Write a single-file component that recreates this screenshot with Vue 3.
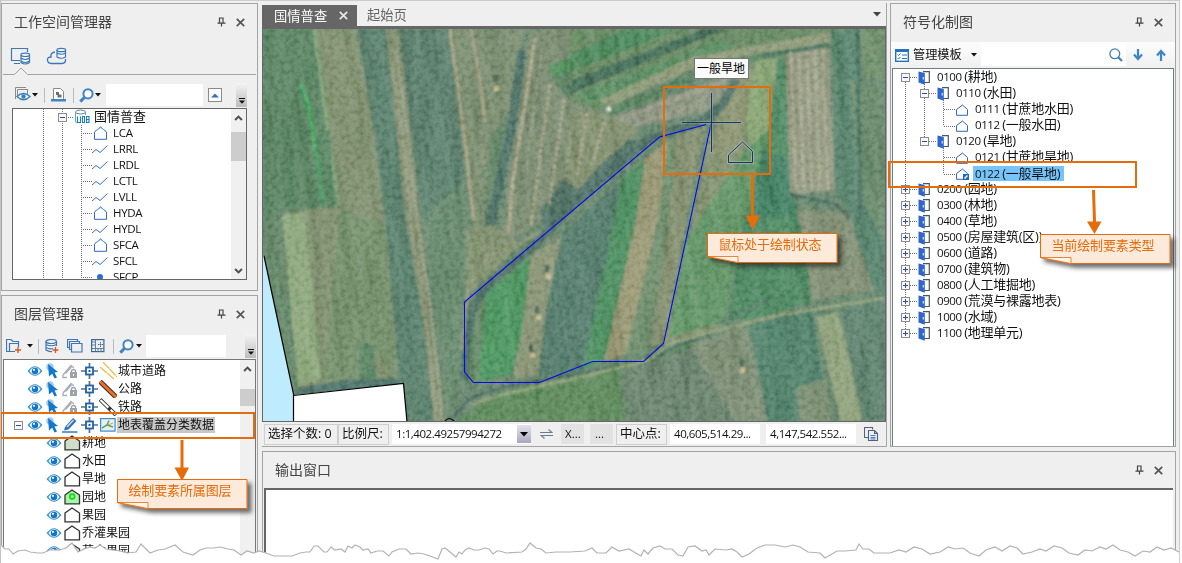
<script setup>
const datasets = [
  { name: 'LCA', icon: 'region' },
  { name: 'LRRL', icon: 'line' },
  { name: 'LRDL', icon: 'line' },
  { name: 'LCTL', icon: 'line' },
  { name: 'LVLL', icon: 'line' },
  { name: 'HYDA', icon: 'region' },
  { name: 'HYDL', icon: 'line' },
  { name: 'SFCA', icon: 'region' },
  { name: 'SFCL', icon: 'line' },
  { name: 'SFCP', icon: 'point' },
]

const layers = [
  { name: '城市道路', icon: 'road-city' },
  { name: '公路', icon: 'road-main' },
  { name: '铁路', icon: 'road-rail' },
]

const classes = [
  { name: '耕地', fill: '#cfdcc8' },
  { name: '水田', fill: '#fff' },
  { name: '旱地', fill: '#fff' },
  { name: '园地', fill: '#a9f5a9', ring: true },
  { name: '果园', fill: '#fff' },
  { name: '乔灌果园', fill: '#fff' },
  { name: '苗木果园', fill: '#d9fbe0', ring: true },
]

const symbols = [
  { code: '0100', name: '耕地', level: 0, open: true },
  { code: '0110', name: '水田', level: 1, open: true },
  { code: '0111', name: '甘蔗地水田', level: 2 },
  { code: '0112', name: '一般水田', level: 2 },
  { code: '0120', name: '旱地', level: 1, open: true },
  { code: '0121', name: '甘蔗地旱地', level: 2 },
  { code: '0122', name: '一般旱地', level: 2, active: true },
  { code: '0200', name: '园地', level: 0 },
  { code: '0300', name: '林地', level: 0 },
  { code: '0400', name: '草地', level: 0 },
  { code: '0500', name: '房屋建筑(区)', level: 0 },
  { code: '0600', name: '道路', level: 0 },
  { code: '0700', name: '建筑物', level: 0 },
  { code: '0800', name: '人工堆掘地', level: 0 },
  { code: '0900', name: '荒漠与裸露地表', level: 0 },
  { code: '1000', name: '水域', level: 0 },
  { code: '1100', name: '地理单元', level: 0 },
]

const fields = [
  { c: '#56805f', p: '263,29 316,29 338,206 263,220' },
  { c: '#5f8163', p: '263,215 285,212 306,400 295,395 263,255' },
  { c: '#7a8b6b', p: '316,29 356,29 374,130 385,220 399,385 300,395 285,212 338,206' },
  { c: '#6f8b66', p: '340,210 386,225 398,382 366,340 352,395 322,388' },
  { c: '#88a277', p: '282,215 304,212 322,378 298,388' },
  { c: '#55805f', p: '360,342 372,345 378,384 358,386' },
  { c: '#4c6f66', p: '298,388 345,380 402,378 404,386 294,396' },
  { c: '#557b68', p: '357,29 386,29 396,130 406,220 423,320 434,421 405,421 399,380 386,225 374,130' },
  { c: '#808e70', p: '386,29 399,29 411,130 421,220 432,320 445,421 434,421 423,320 406,220 396,130' },
  { c: '#587c69', p: '399,29 448,29 456,100 466,180 440,230 421,220 411,130' },
  { c: '#648569', p: '421,220 466,180 480,240 465,300 462,380 452,421 445,421 432,310' },
  { c: '#75886b', p: '450,29 524,29 512,120 496,220 474,240 462,140' },
  { c: '#5e8163', p: '490,140 510,110 500,210 484,230' },
  { c: '#74876c', p: '530,29 585,29 600,120 620,150 570,200 500,250 510,160' },
  { c: '#7b8c6b', p: '466,230 494,225 520,245 490,275 466,296' },
  { c: '#4f6f64', p: '578,160 612,140 640,140 545,232 540,210' },
  { c: '#4f8a59', p: '548,66 600,45 600,64 553,78' },
  { c: '#55795c', p: '553,80 580,66 580,105 566,98' },
  { c: '#64865f', p: '570,29 885,29 885,60 720,50 600,110 570,100' },
  { c: '#4a8459', p: '570,55 625,29 680,29 570,72' },
  { c: '#436a55', p: '572,80 705,29 725,29 570,94' },
  { c: '#588a60', p: '575,95 720,40 735,46 590,104' },
  { c: '#8b9876', p: '600,100 690,58 830,32 830,42 700,66 610,106' },
  { c: '#557f5b', p: '606,108 735,58 780,50 780,56 700,76 616,114' },
  { c: '#86907a', p: '612,118 730,74 728,90 706,112 630,128' },
  { c: '#7b8b6b', p: '570,110 605,112 640,130 600,165 578,190 565,180' },
  { c: '#7d8d6a', p: '725,100 755,60 765,110 740,220 720,330 664,344 690,240 708,140' },
  { c: '#87906e', p: '735,80 752,64 748,120 738,150 712,155 722,110' },
  { c: '#84a06f', p: '756,60 778,58 768,130 750,150 746,120' },
  { c: '#5e9163', p: '745,150 768,130 742,230 724,322 668,338 686,240' },
  { c: '#4b855f', p: '780,58 786,58 790,195 802,215 811,302 760,318 728,320 742,230 768,130' },
  { c: '#3f7d60', p: '762,150 790,160 795,215 750,220' },
  { c: '#8b937a', p: '785,50 829,46 835,190 790,196' },
  { c: '#55806a', p: '831,32 860,29 862,110 885,200 885,298 872,290 850,212 836,190' },
  { c: '#6c8c68', p: '860,34 885,30 885,80 864,76' },
  { c: '#668769', p: '850,80 885,84 885,240 860,200' },
  { c: '#7d8b70', p: '796,210 848,212 874,290 812,300 806,250' },
  { c: '#5f8361', p: '466,302 488,286 478,380 466,378' },
  { c: '#48915c', p: '530,257 487,292 478,382 512,374 522,330' },
  { c: '#84906f', p: '531,256 562,234 546,310 538,376 513,378 522,330' },
  { c: '#517868', p: '562,234 622,180 612,230 582,374 538,376 546,310' },
  { c: '#4a8a5c', p: '622,178 645,160 636,220 604,362 582,370 606,260' },
  { c: '#93926e', p: '645,158 668,142 660,220 626,354 604,362 636,220' },
  { c: '#6b8968', p: '668,142 676,136 670,230 652,350 626,354 658,220' },
  { c: '#808c6c', p: '676,136 706,126 690,200 674,290 664,342 650,350 668,230' },
  { c: '#5a8659', p: '455,421 500,392 570,376 660,352 720,336 730,350 745,421' },
  { c: '#66806a', p: '620,370 700,345 735,421 625,421' },
  { c: '#788970', p: '690,345 745,325 755,360 768,421 735,421' },
  { c: '#4f7f68', p: '750,325 812,308 830,421 768,421 758,370' },
  { c: '#74896c', p: '796,388 826,378 832,421 800,421' },
  { c: '#8a9d76', p: '816,318 838,312 865,421 840,421' },
  { c: '#5a7e6b', p: '840,308 885,300 885,421 862,421' },
]

const tracks = [
  { c: '#7ba073', w: 3, d: 'M314 29L338 205' },
  { c: '#3f8f58', w: 4, d: 'M300 84L310 115L318 160L322 203' },
  { c: '#48a861', w: 3, d: 'M301 84L309 105L315 150' },
  { c: '#4f7f5a', w: 5, d: 'M327 130L332 203' },
  { c: '#9f9d80', w: 2, d: 'M390 50L402 130L411 220L425 300L436 421', dash: '2 2' },
  { c: '#a5a389', w: 2, d: 'M397 50L407 130L417 220L430 300L443 421', dash: '3 2' },
  { c: '#a39f80', w: 3, d: 'M450 29L457 80L466 150L474 220' },
  { c: '#a09c80', w: 3, d: 'M471 29L480 80L485 122' },
  { c: '#8c977a', w: 3, d: 'M481 130L483 165', dash: '4 2' },
  { c: '#4a6d62', w: 9, d: 'M522 50L513 120L500 180L490 225' },
  { c: '#b1a98a', w: 3, d: 'M535 38L524 110L513 180L508 235', dash: '6 1' },
  { c: '#aaa486', w: 3, d: 'M550 84L541 150L531 225', dash: '4 2' },
  { c: '#a9a589', w: 3, d: 'M564 99L557 150L549 205', dash: '4 2' },
  { c: '#a7a388', w: 3, d: 'M587 113L577 175', dash: '4 2' },
  { c: '#a7a388', w: 3, d: 'M604 122L592 165', dash: '4 2' },
  { c: '#98a082', w: 2, d: 'M542 50L526 170M572 125L565 180', dash: '4 3' },
  { c: '#4b6c62', w: 8, d: 'M736 80L722 106L700 122L650 138L570 208L535 245L490 283L474 304L467 345L464 380' },
  { c: '#8b9575', w: 3, d: 'M540 232L515 246L488 256L468 290L462 350' },
  { c: '#4b6b60', w: 3, d: 'M450 421L470 398L500 388L575 374L645 362L680 345L720 330' },
  { c: '#8a9d75', w: 3, d: 'M470 405L500 395L580 377L650 360L668 344L720 330L780 315L885 298' },
  { c: '#4a6c5e', w: 3, d: 'M790 194L835 204L850 218' },
  { c: '#527763', w: 3, d: 'M720 322L770 300' },
  { c: '#47725e', w: 4, d: 'M762 56L829 45M858 34L860 220' },
  { c: '#a9a98e', w: 3, d: 'M791 52L796 190M799 52L804 190M807 51L812 190M815 50L820 190M823 49L828 190', dash: '5 1' },
  { c: '#9a9b89', w: 2, d: 'M620 120L725 82M635 125L715 98M630 116L730 77', dash: '5 2' },
]

const blocks = [[547, 270, 549, 277], [537, 311, 539, 318], [531, 350, 533, 356], [742, 364, 743, 371], [496, 80, 497, 89]]

const tear =
  'M0 544L5 549L9 549L13 554L18 551L25 550L30 552L38 553L43 553L50 550L60 550L66 548L72 543L78 552L84 549L90 547L95 548L100 545L106 549L113 550L120 551L127 553L136 552L141 544L145 548L150 553L158 550L165 549L170 547L175 545L183 552L193 555L200 550L206 548L213 548L220 547L228 549L234 550L241 555L247 551L254 553L259 551L266 553L274 556L292 556L300 553L306 552L310 552L314 546L318 546L324 552L327 552L331 547L335 550L341 549L345 552L348 546L352 548L355 545L360 547L363 550L368 549L371 553L377 551L383 551L389 556L392 552L399 549L403 549L406 549L411 554L418 553L424 554L430 556L438 559L442 549L445 548L450 552L456 557L459 552L462 554L465 550L469 548L474 550L479 550L485 548L489 549L493 554L497 551L500 551L506 553L522 552L526 549L530 543L536 548L541 549L546 553L556 552L570 552L585 551L592 548L597 553L606 553L612 547L619 551L629 549L634 552L641 556L644 550L648 554L653 548L660 546L665 549L672 549L678 555L683 556L688 547L695 546L702 551L706 550L709 555L715 549L726 550L732 549L737 552L742 557L749 554L757 548L765 545L775 545L785 547L793 545L800 547L808 552L820 553L825 558L837 551L845 551L856 550L859 544L863 549L869 549L874 553L890 553L899 550L906 552L914 547L922 549L930 554L940 552L948 547L955 549L963 548L970 553L979 556L986 550L995 547L1002 551L1010 546L1017 548L1023 554L1032 552L1040 549L1046 551L1054 546L1062 548L1069 553L1078 555L1085 550L1092 551L1100 547L1106 549L1113 545L1120 550L1128 552L1135 556L1143 551L1150 552L1157 547L1164 550L1171 548L1179 552'

const notes = [
  { x: 117, y: 479, text: '绘制要素所属图层' },
  { x: 707, y: 233, text: '鼠标处于绘制状态' },
  { x: 1040, y: 234, text: '当前绘制要素类型' },
]
</script>

<template>
  <div class="app">
    <svg class="defs" width="0" height="0">
      <symbol id="pin" viewBox="0 0 9 10"><path d="M2.5 1H6.5M2.5 .5V6M6 .5V6M.5 6.2H8.500M4.500 6.500V9.500" fill="none" stroke="#444" stroke-width="1.200" /></symbol>
      <symbol id="cross" viewBox="0 0 9 9"><path d="M.8 .8L8.2 8.2M8.2 .8L.8 8.2" stroke="currentColor" stroke-width="1.7" /></symbol>
      <symbol id="caret" viewBox="0 0 6 4"><path d="M0 0H6L3 3.5Z" fill="#111" /></symbol>
      <symbol id="region" viewBox="0 0 16 16"><path d="M2.5 7L8.5 2L14.5 7V14.3H2.5Z" fill="none" stroke="#3366c8" stroke-width="1" /><path d="M2.5 7L8.5 2L14.5 7" fill="none" stroke="#5aa7cf" /></symbol>
      <symbol id="leaf" viewBox="0 0 16 16"><path d="M2.5 8.5L8.5 4L13.5 8.5V14.3H2.5Z" fill="none" stroke="#3366c8" /></symbol>
      <symbol id="line" viewBox="0 0 16 16"><path d="M0 12L4 8.5L8 11.5L15.5 4.5" fill="none" stroke="#3f67c0" /></symbol>
      <symbol id="point" viewBox="0 0 16 16"><circle cx="8" cy="8" r="3" fill="#2d6fd0" /></symbol>
      <symbol id="search" viewBox="0 0 15 15"><circle cx="9" cy="5.8" r="4.6" fill="#fff" stroke="#4084c4" stroke-width="2" /><path d="M5.5 9.4L1.3 13.6" stroke="#4084c4" stroke-width="3" /></symbol>
      <symbol id="eye" viewBox="0 0 16 12"><path d="M.5 6Q8-3.5 15.5 6Q8 15.5 .5 6Z" fill="#3f93d2" /><path d="M2.5 6Q4.500 2.500 8 2.200Q11.500 2.500 13.500 6Q11.500 9.500 8 9.800Q4.500 9.500 2.500 6Z" fill="#eef6fc" /><circle cx="8" cy="6" r="3.2" fill="#1376c6" /><circle cx="7" cy="4.8" r="1.1" fill="#fff" /></symbol>
      <symbol id="pick" viewBox="0 0 14 16"><circle cx="4" cy="4" r="3.8" fill="#9fcdf2" /><path d="M2 1L12 9L8.5 9.5L11 14.5L8.5 15.5L6.2 10.8L3 13.5Z" fill="#1478cc" /></symbol>
      <symbol id="lockpen" viewBox="0 0 16 16"><path d="M1 12L9 2.5L12 5M1 12V14.5H5M3.5 10.5L9.5 4" fill="none" stroke="#a9b0b8" stroke-width="1.4" /><path d="M8 9H15V15H8Z" fill="#9ba2aa" /><path d="M9.5 9V7.5Q11.5 5.5 13.5 7.5V9" fill="none" stroke="#9ba2aa" stroke-width="1.3" /><path d="M11.5 11V13" stroke="#fff" /></symbol>
      <symbol id="pen" viewBox="0 0 16 16"><path d="M3 10L11 1L14.5 4L6.5 12.5L2 13.5Z" fill="#3472b4" /><path d="M5 10L11.5 3" stroke="#d2e3f5" stroke-width="1.2" /><path d="M0 15H15.5" stroke="#3b82c4" stroke-width="1.6" /></symbol>
      <symbol id="snap" viewBox="0 0 17 16"><path d="M0 8H17M8.5 0V16" stroke="#54708c" stroke-width="1.7" /><rect x="5" y="4.5" width="7" height="7" fill="#fff" stroke="#1f62a8" stroke-width="1.8" /><rect x="7.5" y="7" width="2" height="2" fill="#1f62a8" /></symbol>
      <symbol id="road-city" viewBox="0 0 18 18"><path d="M1 5L15 17M4 0L18 15" stroke="#f0c055" stroke-width="1.4" stroke-dasharray="9 .6" /></symbol>
      <symbol id="road-main" viewBox="0 0 18 18"><path d="M1 1.5L17 17" stroke="#333" stroke-width="5" /><path d="M1 1.5L17 17" stroke="#f26f21" stroke-width="3" /></symbol>
      <symbol id="road-rail" viewBox="0 0 18 18"><path d="M1 1.5L17 17" stroke="#333" stroke-width="4" /><path d="M1.5 2L16.5 16.5" stroke="#fff" stroke-width="2.2" stroke-dasharray="11 3" /></symbol>
      <symbol id="door" viewBox="0 0 12 14"><path d="M5 .7H11.3V11.5H5" fill="#fff" stroke="#4b5560" stroke-width="1.2" /><path d="M.5 .5L6.8 2V13.8L.5 11.5Z" fill="#2f66cc" /><path d="M5.2 6V8.5" stroke="#fff" stroke-width="1" /></symbol>
      <symbol id="minus" viewBox="0 0 9 9"><rect x=".5" y=".5" width="8" height="8" fill="#f8f8f8" stroke="#8b8b8b" /><path d="M2 4.5H7" stroke="#2e4ca0" /></symbol>
      <symbol id="plus" viewBox="0 0 9 9"><rect x=".5" y=".5" width="8" height="8" fill="#f8f8f8" stroke="#8b8b8b" /><path d="M2 4.5H7M4.5 2V7" stroke="#2e4ca0" /></symbol>
      <symbol id="chevron" viewBox="0 0 8 6"><path d="M.6 5L4 1.6L7.4 5" fill="none" stroke="#505050" stroke-width="2" /></symbol>
      <symbol id="overflow" viewBox="0 0 6 6"><path d="M0 .500H6" stroke="#111" /><path d="M0 2.500H6L3 5.800Z" fill="#111" /></symbol>
    </svg>

    <div class="left">
      <section class="panel workspace">
        <header class="title">工作空间管理器<i></i><svg class="ic-pin"><use href="#pin" /></svg><svg class="ic-x"><use href="#cross" /></svg></header>
        <svg class="tabs" width="254" height="38" viewBox="2 40 254 38">
          <g fill="none" stroke="#3c78b4">
            <path d="M20 60.500H11.500V48.500H27.500V52M14 63.500H20" stroke-width="1.200" />
            <g fill="#f4f8fc" stroke-width="1.200">
              <path d="M21 55V62.500Q25 65.500 29.500 62.500V55" /><path d="M21 58Q25 61 29.500 58M21 61Q25 64 29.500 61" /><ellipse cx="25.300" cy="54.800" rx="4.300" ry="1.700" />
            </g>
            <path d="M55 52Q50 53 51 57Q47 57 47.500 60.500Q48 63.500 51 63.500H62Q66 63 65.500 59" stroke-width="1.300" />
            <g fill="#f4f8fc" stroke-width="1.200">
              <path d="M57 50V57Q61 59.500 65.500 57V50" /><path d="M57 53Q61 55.500 65.500 53" /><ellipse cx="61.300" cy="50" rx="4.300" ry="1.700" />
            </g>
            <path d="M3 74.500H14.500L21 68L27.500 74.500H256" stroke="#a3a3a3" />
          </g>
        </svg>
        <div class="toolbar tb1">
          <svg class="ic-view" width="16" height="16"><path d="M2.500 10V2.500H13M.500 12V.500H11" fill="none" stroke="#8a8a8a" /><path d="M12.500 3V8" stroke="#8a8a8a" fill="none" /><path d="M2 9.500Q8.500 3.500 15 9.500Q8.500 16 2 9.500Z" fill="#fff" stroke="#3c80be" stroke-width="1.400" /><circle cx="8.500" cy="9.500" r="2.200" fill="#3c80be" /></svg>
          <svg class="ic-caret"><use href="#caret" /></svg><b class="sep"></b>
          <svg class="ic-save" width="15" height="14"><path d="M2.500 11V.500H9.500L12.500 3.500V11" fill="#fff" stroke="#888" /><path d="M5 4H8V6.500H10.500V9.500H6.500V7H5Z" fill="#64707c" /><path d="M0 11H15V13.500H0Z" fill="#4084c4" /></svg>
          <b class="sep"></b>
          <svg class="ic-search"><use href="#search" /></svg><svg class="ic-caret"><use href="#caret" /></svg>
          <div class="field f1"></div>
          <div class="up"><svg width="8" height="5"><path d="M0 4.500L4 .500L8 4.500Z" fill="#2f77bd" /></svg></div>
          <div class="more"><svg><use href="#overflow" /></svg></div>
        </div>
        <div class="tree">
          <svg class="guides" width="90" height="170" viewBox="13 109 90 170"><path d="M43.500 109V279M62.500 109V279M81.500 125V279M66 117.500H74M81 133.500H92M81 149.500H92M81 165.500H92M81 181.500H92M81 197.500H92M81 213.500H92M81 229.500H92M81 245.500H92M81 261.500H92M81 277.500H92" stroke="#707070" stroke-dasharray="1 1" /></svg>
          <div class="rows">
            <div class="row root"><svg class="ic-box"><use href="#minus" /></svg>
              <svg class="ic-udb" width="16" height="16"><path d="M1.500 3V12M11.500 3V6M1.500 12Q2 14 3 14" fill="none" stroke="#5aa9cc" /><ellipse cx="6.500" cy="3" rx="5" ry="2" fill="#fff" stroke="#5585a8" /><path d="M3.500 7.500V13.500H6.500V7.500M8.500 7.500H10.500V13.500H8.500ZM12.500 7.500H15V13.500H12.500ZM12.500 10.500H15" fill="none" stroke="#1b7fc0" stroke-width="1.100" /></svg>
              <span>国情普查</span></div>
            <div v-for="d in datasets" :key="d.name" class="row data"><svg class="ic16"><use :href="'#' + d.icon" /></svg><span>{{ d.name }}</span></div>
          </div>
          <div class="scroll"><svg class="ic-up"><use href="#chevron" /></svg><div class="thumb t1"></div><i></i><svg class="ic-up down"><use href="#chevron" /></svg></div>
        </div>
      </section>

      <section class="panel layermgr">
        <header class="title">图层管理器<i></i><svg class="ic-pin"><use href="#pin" /></svg><svg class="ic-x"><use href="#cross" /></svg></header>
        <div class="toolbar tb2">
          <svg width="16" height="14"><path d="M9 12.500H.500V.500H5L7 2.500H12.500V8M3.500 12V4.500H13" fill="none" stroke="#3c78b4" stroke-width="1.200" /><path d="M12 8V14M9 11H15" stroke="#d8541c" stroke-width="1.300" /></svg>
          <svg class="ic-caret g1"><use href="#caret" /></svg><b class="sep"></b>
          <svg width="14" height="14"><path d="M1 2.500V11Q4 13 7 12.500M11.500 2.500V7M1 5.500Q6 8 11.500 5.500M1 8.500Q5 10.500 8 9.500" fill="none" stroke="#3c78b4" stroke-width="1.200" /><ellipse cx="6.200" cy="2.500" rx="5.200" ry="2" fill="none" stroke="#3c78b4" stroke-width="1.200" /><path d="M10.500 8V14M7.500 11H13.500" stroke="#d8541c" stroke-width="1.300" /></svg>
          <svg class="g2" width="16" height="14"><path d="M2 8.500H.500V.500H10.500V2M4 10.500H2.500V2.500H12.500V4M4.500 4.500H15V13H4.500Z" fill="none" stroke="#3c78b4" stroke-width="1.200" /></svg>
          <svg class="g2" width="14" height="14"><rect x=".6" y=".6" width="12.300" height="12" fill="none" stroke="#3c6894" stroke-width="1.200" /><path d="M4.500 1V12M1 9.500H13M1 3H4M1 6H4M7 13V10M10 13V10" stroke="#5d7fa2" /><path d="M9.500 3V8M7 5.500H12" stroke="#2c6da8" stroke-dasharray="1.500 .5" /></svg>
          <b class="sep"></b>
          <svg class="ic-search"><use href="#search" /></svg><svg class="ic-caret"><use href="#caret" /></svg>
          <div class="field f2"></div><i></i>
          <div class="more"><svg><use href="#overflow" /></svg></div>
        </div>
        <div class="layers">
          <div class="rows">
            <div v-for="l in layers" :key="l.name" class="lrow">
              <svg class="ic-eye"><use href="#eye" /></svg><svg class="ic-pick"><use href="#pick" /></svg><svg class="ic16"><use href="#lockpen" /></svg><svg class="ic-snap"><use href="#snap" /></svg><svg class="ic18"><use :href="'#' + l.icon" /></svg><span>{{ l.name }}</span>
            </div>
            <div class="lrow current">
              <svg class="ic-box"><use href="#minus" /></svg><svg class="ic-eye"><use href="#eye" /></svg><svg class="ic-pick"><use href="#pick" /></svg><svg class="ic16"><use href="#pen" /></svg><svg class="ic-snap"><use href="#snap" /></svg>
              <svg class="ic-map" width="16" height="14"><rect x=".6" y=".6" width="14.500" height="12.500" fill="#e4f1f4" stroke="#3c8ac8" stroke-width="1.200" /><path d="M2 10L7 7L9 2.500M7 7L13 9" fill="none" stroke="#65a05c" stroke-width="1.500" /><path d="M8 7L13 5" stroke="#d9a04a" /></svg>
              <span>地表覆盖分类数据</span>
            </div>
            <div v-for="c in classes" :key="c.name" class="lrow sub">
              <svg class="ic-eye"><use href="#eye" /></svg>
              <svg width="17" height="16"><path d="M1 6L8 1L15.500 6V14.800H1Z" :fill="c.fill" stroke="#303030" stroke-width="1.300" /><circle v-if="c.ring" cx="8.200" cy="7.500" r="2.400" fill="none" stroke="#10d810" stroke-width="1.600" /></svg>
              <span>{{ c.name }}</span>
            </div>
          </div>
          <div class="scroll"><svg class="ic-up"><use href="#chevron" /></svg><div class="thumb t2"></div></div>
        </div>
      </section>
    </div>

    <div class="main">
      <div class="upper">
        <section class="mapwin">
          <nav class="doctabs">
            <span class="tab on">国情普查<svg class="ic-x"><use href="#cross" /></svg></span><span class="tab">起始页</span><i></i>
            <svg class="dd" width="8" height="5"><path d="M0 0H8L4 4.500Z" fill="#444" /></svg>
          </nav>
          <svg class="map" viewBox="263 29 622 392">
            <defs>
              <filter id="soft" x="0" y="0" width="1" height="1"><feGaussianBlur stdDeviation=".9" /></filter>
              <filter id="grain" x="0" y="0" width="1" height="1" color-interpolation-filters="sRGB">
                <feTurbulence type="fractalNoise" baseFrequency=".2" numOctaves="3" seed="4" />
                <feColorMatrix values="2 0 0 0 -.25  2 0 0 0 -.25  2 0 0 0 -.25  0 0 0 0 1" />
              </filter>
              <filter id="streak" x="0" y="0" width="1" height="1" color-interpolation-filters="sRGB">
                <feTurbulence type="fractalNoise" baseFrequency=".1 .012" numOctaves="3" seed="9" />
                <feColorMatrix values="2 0 0 0 -.3  2 0 0 0 -.3  2 0 0 0 -.3  0 0 0 0 1" />
              </filter>
            </defs>
            <rect x="263" y="29" width="623" height="393" fill="#64836a" />
            <g filter="url(#soft)">
              <polygon v-for="(f, i) in fields" :key="i" :points="f.p" :fill="f.c" />
              <path v-for="(t, i) in tracks" :key="'t' + i" :d="t.d" :stroke="t.c" :stroke-width="t.w" :stroke-dasharray="t.dash" fill="none" />
              <g v-for="b in blocks" :key="b[0]"><rect :x="b[0] - 2" :y="b[1] - 5" width="4" height="7" fill="#435f50" /><rect :x="b[2] - 3" :y="b[3] - 3" width="5" height="5" fill="#c4bd92" /></g>
              <circle cx="609" cy="109" r="2.500" fill="#e4ead6" />
            </g>
            <g transform="rotate(-7 420 225)"><rect class="texture streak" x="200" y="-60" width="760" height="600" filter="url(#streak)" /></g>
            <rect class="texture grain" x="263" y="29" width="623" height="393" filter="url(#grain)" />
            <path d="M264 256L293.500 394V422H263V256Z" fill="#bfebff" />
            <path d="M293.500 395L403.500 383.500L407 422H293.500Z" fill="#fff" />
            <path d="M264 256L293.500 394V422M293.500 395.500L403.500 383.500L407 422M445 421Q449 416 454 421" fill="none" stroke="#000" stroke-width="1.200" />
            <path d="M706 124.500L659.500 137L464.500 302V372L473.500 382.500H539.500L592.500 361.500H643.500L663.500 343.500L711 124" fill="none" stroke="#0808e8" stroke-width="1.100" />
            <g fill="none">
              <path d="M681 122.500H742M711.500 92V153" stroke="#a9b6ad" stroke-opacity=".4" stroke-width="3" /><path d="M728.500 155L742.500 142L752.500 151.500V162.500H728.500Z" stroke="#a9b6ad" stroke-opacity=".7" stroke-width="3" />
              <path d="M682 122.500H741M711.500 93V152M728.500 155L742.500 142L752.500 151.500V162.500H728.500Z" stroke="#17365f" />
            </g>
          </svg>
          <footer class="status">
            <span class="cell s1">选择个数: 0</span><span class="cell s2">比例尺:</span>
            <span class="input scale"><span class="num">1:1,402.49257994272</span><b><svg width="8" height="5"><path d="M0 0H8L4 4.500Z" fill="#000" /></svg></b></span>
            <svg class="swap" width="13" height="10"><path d="M0 3.500H12L8.500 .500M13 6.500H1L4.500 9.500" fill="none" stroke="#6c7a8c" stroke-width="1.100" /></svg>
            <span class="btn">X...</span><span class="btn b2">...</span><span class="cell s3">中心点:</span>
            <span class="input c1 num">40,605,514.29...</span><span class="input c2 num">4,147,542.552...</span>
            <svg class="copy" width="15" height="15"><path d="M4 10.500H.500V.500H8.500V2.500M4.500 3.500H10.500L13.500 6.500V13.500H4.500ZM10.500 3.500V6.500H13.500" fill="none" stroke="#52627c" stroke-width="1.100" /><path d="M6.500 8.500H11.500M6.500 10.500H11.500M6.500 12H11.500" stroke="#3c7ec4" /></svg>
          </footer>
        </section>

        <section class="panel symbols">
          <header class="title">符号化制图<i></i><svg class="ic-pin"><use href="#pin" /></svg><svg class="ic-x"><use href="#cross" /></svg></header>
          <div class="toolbar tb3">
            <svg width="14" height="13"><rect x=".7" y=".7" width="12.600" height="11.600" fill="#fff" stroke="#2373bc" stroke-width="1.400" /><path d="M1 2H13" stroke="#2373bc" stroke-width="2" /><path d="M2.500 5.500L3.500 6.500L5.500 4.500M2.500 9L3.500 10L5.500 8M7 6H12M7 9.500H12" fill="none" stroke="#2373bc" /></svg>
            <span class="mt">管理模板</span><svg class="ic-caret"><use href="#caret" /></svg>
            <div class="field f3"><svg width="14" height="14"><circle cx="5.800" cy="5.800" r="4.900" fill="none" stroke="#3f7fb8" stroke-width="1.300" /><path d="M9.500 9.500L13 13" stroke="#3f7fb8" stroke-width="2.200" /></svg></div>
            <svg class="arr a1" width="10" height="12"><path d="M5 0V9M1 5.500L5 10L9 5.500" fill="none" stroke="#3d85c6" stroke-width="2.200" /></svg>
            <svg class="arr a2" width="10" height="12"><path d="M5 12V3M1 6.500L5 2L9 6.500" fill="none" stroke="#3d85c6" stroke-width="2.200" /></svg>
          </div>
          <div class="stree">
            <svg class="guides" width="80" height="280" viewBox="893 69 80 280"><path d="M905.500 82V333M924.500 84V141M943.500 100V126M943.500 148V174M910 77.500H918M929 93.500H937M929 141.500H937M944 109.500H956M944 126.500H956M944 157.500H956M944 174.500H956M910 189.500H918M910 205.500H918M910 221.500H918M910 237.500H918M910 253.500H918M910 269.500H918M910 285.500H918M910 301.500H918M910 317.500H918M910 333.500H918" stroke="#707070" stroke-dasharray="1 1" /></svg>
            <div v-for="s in symbols" :key="s.code" class="srow" :class="['lv' + s.level, { active: s.active }]">
              <template v-if="s.level < 2"><svg class="ic-box"><use :href="s.open ? '#minus' : '#plus'" /></svg><svg class="ic-door"><use href="#door" /></svg></template>
              <svg v-else class="ic16"><use href="#leaf" /><path v-if="s.active" d="M9 9H15V15H9Z" fill="#1b6ac0" /><path v-if="s.active" d="M10.500 13.500L13.500 10.500" stroke="#fff" stroke-width="1.500" /></svg>
              <span class="label"><span class="code">{{ s.code }}</span> ({{ s.name }})</span>
            </div>
          </div>
        </section>
      </div>

      <section class="panel output">
        <header class="title">输出窗口<i></i><svg class="ic-pin"><use href="#pin" /></svg><svg class="ic-x"><use href="#cross" /></svg></header>
        <div class="console"></div>
      </section>
    </div>

    <svg class="overlay" width="1182" height="563" viewBox="0 0 1182 563">
      <defs><filter id="drop" x="-10%" y="-20%" width="125%" height="170%"><feDropShadow dx="4" dy="4" stdDeviation="2" flood-color="#222" flood-opacity=".65" /></filter></defs>
      <path :d="tear + 'L1182 552V563H0Z'" fill="#fff" /><path :d="tear" fill="none" stroke="#b2b2b2" stroke-width="1.200" />
      <g fill="none" stroke="#e46c0a" stroke-width="2"><rect x="664" y="87" width="106" height="87" /><rect x="1" y="413" width="253" height="25" /><rect x="889" y="162" width="247" height="25" /></g>
      <g fill="#e46c0a" stroke="#e46c0a">
        <path d="M752.500 174V217M182 440V468M1093.500 190L1094.500 222" stroke-width="3" />
        <path d="M745.500 215.500H760L752.700 230ZM174.500 467.500H189L182 481ZM1087 221.500H1101.500L1094.500 234Z" stroke="none" />
      </g>
      <rect x="694.500" y="58.500" width="54" height="20" fill="#fafafa" stroke="#777" />
      <text x="697" y="72.500" class="tip" textLength="48">一般旱地</text>
      <g v-for="n in notes" :key="n.text" :transform="`translate(${n.x} ${n.y})`">
        <path d="M.500 .500H130V29.500H31L.500 23.500Z" fill="#fdeadb" stroke="#e46c0a" filter="url(#drop)" />
        <path d="M.500 23.500H31V29.500Z" fill="#fff3ea" stroke="#e46c0a" stroke-width=".8" />
        <text x="11.500" y="15.500" textLength="103">{{ n.text }}</text>
      </g>
    </svg>
  </div>
</template>

<style>
body { margin: 0; background: #fff; }
</style>

<style scoped>
.app { position: relative; width: 1180px; height: 563px; overflow: hidden; display: flex; gap: 4px; padding: 2px 3px 0 0; border-top: 1px solid #ccc; border-left: 1px solid #c4c4c4; border-right: 1px solid #ccc; background: #efefef; color: #111; font: 12px/16px "Open Sans", "Noto Sans CJK SC", sans-serif; white-space: nowrap; }
.app *, .app { box-sizing: border-box; }
svg { flex: none; display: block; }
i { flex: 1; }
.defs { position: absolute; }
.left { width: 257px; display: flex; flex-direction: column; gap: 4px; flex: none; }
.panel { border: 1px solid #a3a3a3; display: flex; flex-direction: column; overflow: hidden; }
.workspace { height: 288px; flex: none; }
.layermgr { height: 270px; flex: none; }
.title { display: flex; align-items: center; height: 36px; flex: none; padding: 0 12px; font-size: 14px; color: #444; }
.ic-pin { width: 9px; height: 10px; margin-right: 10px; }
.ic-x { width: 9px; height: 9px; color: #555; }
.ic-caret { width: 6px; height: 4px; margin-left: 3px; }
.ic-search { width: 15px; height: 15px; }
.ic16 { width: 16px; height: 16px; }
.ic18 { width: 18px; height: 18px; }
.ic-box { width: 9px; height: 9px; }
.toolbar { display: flex; align-items: center; height: 24px; flex: none; }
.sep { width: 1px; height: 15px; background: #bbb; }
.field { background: #fff; height: 22px; flex: none; }
.more { width: 11px; height: 24px; background: linear-gradient(#f4f4f4, #bcbcbc); display: flex; align-items: flex-end; justify-content: center; padding-bottom: 3px; }
.more svg { width: 6px; height: 6px; }
.tb1 { margin-top: 5px; padding-left: 13px; }
.tb1 .ic-caret { margin-left: 1px; margin-right: 6px; }
.tb1 .ic-save { margin: 0 7px 0 6px; }
.tb1 .sep + .ic-search { margin-left: 5px; }
.tb1 .ic-search + .ic-caret { margin: 0 5px 0 1px; }
.f1 { width: 97px; }
.up { width: 14px; height: 14px; border: 1px solid #8b8b8b; background: #fff; margin: 0 14px 0 5px; display: flex; align-items: center; justify-content: center; flex: none; }
.tree { position: relative; display: flex; width: 235px; height: 172px; margin: 1px 0 0 10px; border: 1px solid #666; background: #fff; overflow: hidden; }
.guides { position: absolute; left: 0; top: 0; }
.rows { position: relative; flex: 1; overflow: hidden; }
.row { display: flex; align-items: center; height: 16px; }
.root { padding-left: 45px; font-size: 13px; }
.ic-udb { margin: 0 4px 0 7px; }
.root span { line-height: 15px; padding-bottom: 1px; }
.data { padding-left: 79px; font-size: 11.5px; letter-spacing: -.3px; gap: 5px; }
.scroll { width: 15px; background: #f0f0f0; flex: none; display: flex; flex-direction: column; align-items: center; padding: 6px 0 5px; }
.ic-up { width: 9px; height: 6px; }
.down { transform: rotate(180deg); }
.thumb { width: 15px; background: #cdcdcd; }
.t1 { height: 29px; margin-top: 11px; }
.t2 { height: 17px; margin-top: 17px; }
.tb2 { padding-left: 4px; padding-right: 1px; margin-top: 2px; }
.tb2 .g1 { margin: 0 5px 0 5px; }
.tb2 .sep + svg { margin-left: 6px; }
.g2 { margin-left: 8px; }
.tb2 .g2 + .sep { margin-left: 8px; }
.tb2 .sep + .ic-search { margin-left: 5px; }
.tb2 .ic-search + .ic-caret { margin-left: 2px; }
.f2 { width: 80px; margin-left: 4px; }
.layers { display: flex; flex: 1; margin: 1px 1px 0 1px; border: 1px solid #777; border-bottom: 0; background: #fff; }
.layers .rows { padding-top: 2px; }
.lrow { display: flex; align-items: center; height: 18px; padding-left: 23px; font-size: 12px; }
.ic-eye { width: 16px; height: 12px; }
.ic-pick { width: 14px; height: 16px; margin: 0 2px 0 3px; }
.ic-snap { width: 17px; height: 16px; margin: 0 1px 0 3px; }
.lrow span { margin-left: 1px; }
.current { padding-left: 10px; }
.current .ic-eye { margin-left: 4px; }
.ic-map { margin-left: 1px; margin-right: 1px; }
.lrow.current span { background: #c8c8c8; margin-left: 0; padding: 0 1px; }
.sub { padding-left: 42px; }
.sub svg + svg { margin-left: 2px; }
.main { flex: 1; min-width: 0; display: flex; flex-direction: column; gap: 4px; }
.upper { display: flex; gap: 3px; height: 444px; flex: none; }
.mapwin { width: 625px; display: flex; flex-direction: column; flex: none; border-right: 1px solid #a3a3a3; border-bottom: 1px solid #a3a3a3; padding-top: 2px; }
.doctabs { display: flex; height: 24px; border-bottom: 3px solid #666; flex: none; }
.tab { display: flex; align-items: center; height: 20px; padding-left: 10px; font-size: 13.3px; color: #666; }
.on { width: 95px; height: 21px; background: #666; color: #fff; padding-left: 12px; }
.on .ic-x { color: #e8e8e8; margin-left: 12px; }
.doctabs .dd { align-self: center; margin: 0 5px 2px 0; }
.map { border-left: 1px solid #666; border-right: 1px solid #666; border-bottom: 1px solid #666; width: 624px; height: 393px; overflow: hidden; }
.texture { mix-blend-mode: soft-light; }
.streak { opacity: .16; }
.grain { opacity: .24; }
.status { display: flex; align-items: center; flex: 1; padding-left: 2px; font-size: 12.5px; }
.cell { border: 1px solid #cfcfcf; height: 21px; line-height: 18px; padding-left: 3px; }
.s1 { width: 74px; }
.s2 { width: 51px; }
.s3 { width: 51px; margin-left: 3px; }
.num { font-size: 11.5px; letter-spacing: -.45px; }
.input { background: #fff; height: 20px; line-height: 20px; padding-left: 4px; display: flex; align-items: center; }
.scale { width: 139px; margin-left: 3px; justify-content: space-between; }
.scale b { width: 14px; height: 18px; background: linear-gradient(#e4e2ee, #aaa6c0); display: flex; align-items: center; justify-content: center; }
.swap { margin: 0 8px 0 9px; }
.btn { width: 23px; height: 20px; line-height: 19px; background: #e2e2e2; padding-left: 4px; font-size: 11.5px; }
.b2 { margin-left: 6px; padding-left: 5px; }
.c1 { width: 90px; margin-left: 3px; }
.c2 { width: 90px; margin-left: 6px; }
.copy { margin-left: 8px; }
.symbols { width: 286px; flex: none; }
.tb3 { margin-top: 2px; height: 26px; padding-left: 4px; background: linear-gradient(#fdfdfd, #f0f0f0); }
.mt { margin-left: 4px; font-size: 12.2px; }
.tb3 .ic-caret { margin-left: 9px; }
.f3 { width: 145px; margin-left: 4px; display: flex; align-items: center; justify-content: flex-end; padding-right: 3px; }
.a1 { margin-left: 7px; }
.a2 { margin-left: 13px; }
.stree { position: relative; flex: 1; border: 1px solid #777b82; border-bottom: 0; margin: 0 1px; background: #fff; }
.srow { position: relative; display: flex; align-items: center; height: 16px; font-size: 13px; }
.lv0 { padding-left: 8px; }
.lv1 { padding-left: 27px; }
.lv2 { padding-left: 61px; }
.ic-door { width: 12px; height: 14px; margin: 1px 7px 0 8px; }
.label { line-height: 15px; word-spacing: -.5px; letter-spacing: -.25px; position: relative; top: -1px; }
.lv2 .label { margin-left: 5px; }
.code { font-size: 11.5px; letter-spacing: -.45px; }
.active .label { background: #77c4fb; padding-right: 4px; margin-left: 3px; padding-left: 2px; top: 0; }
.output { flex: 1; }
.output .title { height: 36px; }
.console { flex: 1; margin: 0 2px 0 1px; border: 2px solid #666; border-right: 0; border-bottom: 0; background: #fff; }
.overlay { position: absolute; left: -1px; top: -1px; }
.overlay text { font-size: 13px; fill: #e46c0a; }
.overlay .tip { font-size: 12px; fill: #000; }
</style>
